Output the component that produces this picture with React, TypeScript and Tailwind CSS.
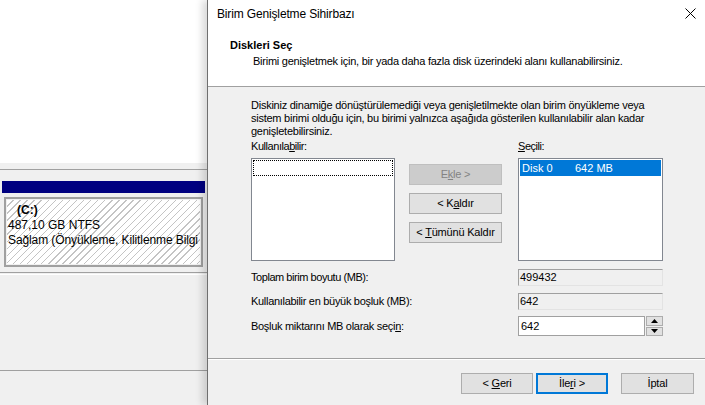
import React from 'react';

const font = { fontFamily: '"Liberation Sans", Arial, sans-serif' };

function WinButton({
  children,
  disabled,
  primary,
  className = '',
}: {
  children: React.ReactNode;
  disabled?: boolean;
  primary?: boolean;
  className?: string;
}) {
  return (
    <div
      className={
        'flex items-center justify-center h-[21px] text-[11px] tracking-[-0.2px] ' +
        (disabled
          ? 'bg-[#cccccc] border border-[#bfbfbf] text-[#838383] '
          : primary
          ? 'bg-[#e1e1e1] border-2 border-[#0078d7] text-black '
          : 'bg-[#e1e1e1] border border-[#adadad] text-black ') +
        className
      }
    >
      <span className="whitespace-pre">{children}</span>
    </div>
  );
}

function ReadOnlyField({ value }: { value: string }) {
  return (
    <div className="w-[145px] h-[17px] bg-[#f0f0f0] border-t border-l border-[#a0a0a0] border-r-[#e3e3e3] border-b-[#e3e3e3] border-r border-b flex items-center pl-[1px] text-[11px] tracking-normal">
      {value}
    </div>
  );
}

function DiskPanel() {
  return (
    <div className="w-[207px] shrink-0 flex flex-col bg-[#f0f0f0]">
      <div className="h-[163px] bg-white" />
      <div className="h-[6px]" />
      <div className="h-px bg-[#a0a0a0]" />
      <div className="h-[11px]" />
      <div className="h-[12px] mx-[2px] bg-[#000080]" />
      <div className="h-[4px]" />
      <div className="mx-[4px] h-[70px] border-2 border-[#a0a0a0] bg-[#f0f0f0] p-px">
        <div className="h-full overflow-hidden bg-[image:repeating-linear-gradient(135deg,#ffffff_0px,#ffffff_4px,#c4c4c4_4px,#c4c4c4_5px)] text-[12px] leading-[15px] whitespace-nowrap pt-[3px] pl-px">
          <div className="font-bold pl-[9px]">(C:)</div>
          <div>487,10 GB NTFS</div>
          <div className="tracking-[-0.1px]">Sağlam (Önyükleme, Kilitlenme Bilgi</div>
        </div>
      </div>
      <div className="h-[5px]" />
      <div className="h-px bg-[#a0a0a0]" />
      <div className="h-px bg-white mt-px" />
      <div className="h-[95px]" />
      <div className="h-px bg-[#a0a0a0]" />
    </div>
  );
}

export default function App() {
  return (
    <div className="w-[705px] h-[405px] flex overflow-hidden bg-[#f0f0f0] text-black" style={font}>
      <DiskPanel />

      <div className="relative z-10 flex-1 flex flex-col border-l border-[#6f6f6f] shadow-[-5px_0_7px_rgba(0,0,0,0.14)]">
        {/* Header */}
        <div className="h-[87px] bg-white border-b border-[#a0a0a0] flex flex-col">
          <div className="h-[27px] flex items-center justify-between pl-[9px] pr-[10px]">
            <span className="text-[12px] tracking-[-0.15px]">Birim Genişletme Sihirbazı</span>
            <svg width="11" height="11" viewBox="0 0 11 11" className="mr-[-1px]">
              <path d="M0.5 0.5 L10.5 10.5 M10.5 0.5 L0.5 10.5" stroke="#000" strokeWidth="1" />
            </svg>
          </div>
          <div className="pl-[22px] mt-[12px] text-[11px] leading-[13px]">
            <div className="font-bold">Diskleri Seç</div>
            <div className="pl-[23px] mt-[3px] tracking-[-0.25px] whitespace-nowrap">
              Birimi genişletmek için, bir yada daha fazla disk üzerindeki alanı kullanabilirsiniz.
            </div>
          </div>
        </div>

        {/* Body */}
        <div className="flex-1 pl-[43px] pt-[12px] text-[11px] leading-[13px] tracking-[-0.45px]">
          <p className="whitespace-nowrap tracking-[-0.25px]">
            Diskiniz dinamiğe dönüştürülemediği veya genişletilmekte olan birim önyükleme veya
            <br />
            sistem birimi olduğu için, bu birimi yalnızca aşağıda gösterilen kullanılabilir alan kadar
            <br />
            genişletebilirsiniz.
          </p>

          <div className="flex mt-[2px]">
            <div className="w-[144px]">
              Kullanıla<u>b</u>ilir:
            </div>
            <div className="ml-[123px]">
              <u>S</u>eçili:
            </div>
          </div>

          <div className="flex mt-[5px] tracking-normal">
            <div className="w-[144px] h-[103px] bg-white border border-[#828790] p-px">
              <div className="h-[16px] border border-dotted border-black" />
            </div>
            <div className="ml-[14px] w-[93px] flex flex-col gap-[8px] pt-[6px]">
              <WinButton disabled>
                E<u>k</u>le &gt;
              </WinButton>
              <WinButton>
                &lt; K<u>a</u>ldır
              </WinButton>
              <WinButton>
                &lt; <u>T</u>ümünü Kaldır
              </WinButton>
            </div>
            <div className="ml-[16px] w-[145px] h-[103px] bg-white border border-[#828790] p-px">
              <div className="h-[16px] bg-[#0078d7] text-white flex items-center pl-[2px]">
                <span className="w-[53px]">Disk 0</span>
                <span>642 MB</span>
              </div>
            </div>
          </div>

          <div className="flex items-center justify-between w-[412px] mt-[8px]">
            <span>Toplam birim boyutu (MB):</span>
            <ReadOnlyField value="499432" />
          </div>
          <div className="flex items-center justify-between w-[412px] mt-[7px]">
            <span className="tracking-[-0.3px]">Kullanılabilir en büyük boşluk (MB):</span>
            <ReadOnlyField value="642" />
          </div>
          <div className="flex items-center justify-between w-[412px] mt-[6px]">
            <span className="tracking-[-0.3px]">
              Boşluk miktarını MB olarak seçi<u>n</u>:
            </span>
            <div className="flex items-center tracking-normal">
              <div className="w-[127px] h-[20px] bg-white border border-[#a0a0a0] flex items-center pl-[2px]">642</div>
              <div className="ml-[1px] w-[17px] h-[20px] flex flex-col gap-px">
                <div className="flex-1 bg-[#e1e1e1] border border-[#adadad] flex items-center justify-center">
                  <svg width="7" height="4" viewBox="0 0 7 4">
                    <path d="M3.5 0 L7 4 L0 4 Z" fill="#000" />
                  </svg>
                </div>
                <div className="flex-1 bg-[#e1e1e1] border border-[#adadad] flex items-center justify-center">
                  <svg width="7" height="4" viewBox="0 0 7 4">
                    <path d="M0 0 L7 0 L3.5 4 Z" fill="#000" />
                  </svg>
                </div>
              </div>
            </div>
          </div>
        </div>

        {/* Footer */}
        <div className="h-[47px] border-t border-[#a0a0a0]">
          <div className="h-full border-t border-white flex justify-end pt-[13px] pr-[11px]">
            <WinButton className="w-[72px]">
              &lt; <u>G</u>eri
            </WinButton>
            <WinButton primary className="w-[72px] ml-[3px]">
              İle<u>r</u>i &gt;
            </WinButton>
            <WinButton className="w-[73px] ml-[13px]">İptal</WinButton>
          </div>
        </div>
      </div>
    </div>
  );
}
